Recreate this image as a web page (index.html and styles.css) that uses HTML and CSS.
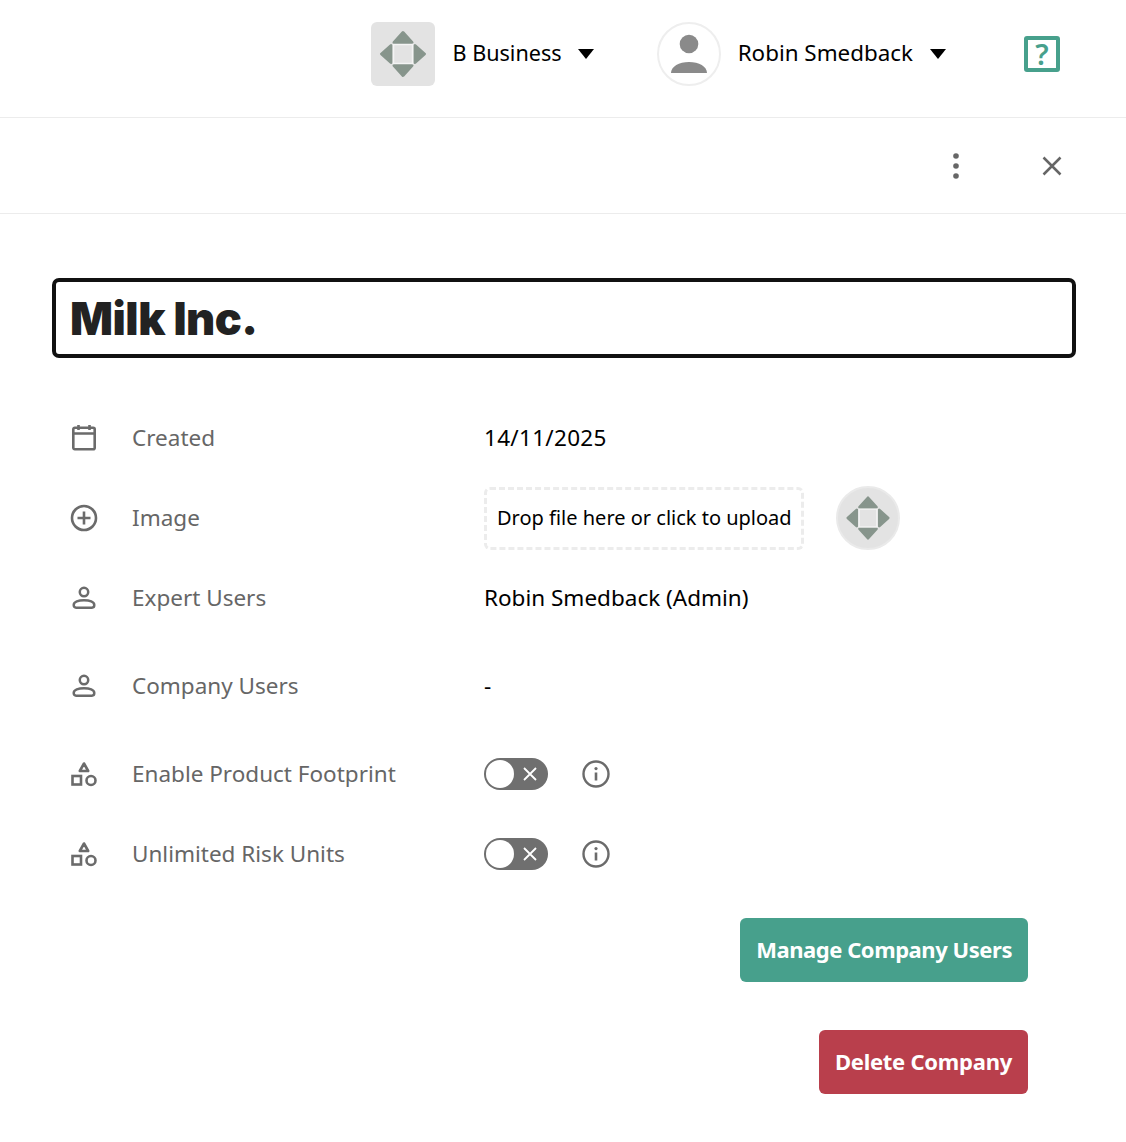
FILE: index.html
```html
<!DOCTYPE html>
<html lang="en">
  <head>
    <meta charset="UTF-8" />
    <meta name="viewport" content="width=device-width, initial-scale=1.0" />
    <title>Milk Inc.</title>
    <link rel="stylesheet" href="styles.css">
  </head>
  <body>
    <svg class="defs" width="0" height="0">
      <symbol id="logo" viewBox="0 0 64 64">
        <g fill="#87958c" stroke="#87958c" stroke-width="3" stroke-linejoin="round">
          <path d="M32 10.500 41 20.500H23Z" />
          <path d="M32 53.500 41 43.500H23Z" />
          <path d="M10.500 32 20 23.500V40.500Z" />
          <path d="M53.500 32 44 23.500V40.500Z" />
        </g>
        <path d="M22 22.500H42M22 41.500H42M22.500 22V42M41.500 22V42" stroke="#f4f4f4" stroke-width="1.500" fill="none" />
      </symbol>
      <symbol id="person" viewBox="0 0 24 24">
        <circle cx="12" cy="6.500" r="3.900" fill="none" stroke="currentColor" stroke-width="2.300" />
        <path d="M2.500 18.500c0-3 4.500-4.500 9.500-4.500s9.500 1.500 9.500 4.500c0 1.400-.8 2.400-2.200 2.400H4.700c-1.400 0-2.200-1-2.200-2.400Z" fill="none" stroke="currentColor" stroke-width="2.300" />
      </symbol>
      <symbol id="shapes" viewBox="0 0 26 26">
        <path d="M13 2.500 17.200 10H8.800Z" fill="none" stroke="currentColor" stroke-width="2.600" stroke-linejoin="round" />
        <rect x="1.500" y="15" width="8.500" height="8.500" fill="none" stroke="currentColor" stroke-width="2.600" />
        <circle cx="20" cy="19.500" r="4.500" fill="none" stroke="currentColor" stroke-width="2.600" />
      </symbol>
      <symbol id="info" viewBox="0 0 28 28">
        <circle cx="14" cy="14" r="12.500" fill="none" stroke="currentColor" stroke-width="2.400" />
        <circle cx="14" cy="8.600" r="1.600" fill="currentColor" />
        <path d="M14 12.500V20.500" stroke="currentColor" stroke-width="2.600" />
      </symbol>
    </svg>

    <header class="topbar">
      <div class="menu menu-company">
        <span class="logo-box"><svg width="64" height="64"><use href="#logo" /></svg></span>
        <span class="menu-name">B Business</span>
        <span class="caret"></span>
      </div>
      <div class="menu menu-user">
        <span class="avatar">
          <svg width="60" height="60" viewBox="0 0 60 60">
            <circle cx="30" cy="20" r="9.300" fill="#8a8a8a" />
            <path d="M12 49c0-6.500 8-11 18-11s18 4.500 18 11Z" fill="#8a8a8a" />
          </svg>
        </span>
        <span class="menu-name">Robin Smedback</span>
        <span class="caret"></span>
      </div>
      <span class="help">?</span>
    </header>

    <div class="toolbar">
      <span class="tool">
        <svg width="24" height="28" viewBox="0 0 24 28" fill="#666">
          <circle cx="12" cy="4" r="2.800" /><circle cx="12" cy="14" r="2.800" /><circle cx="12" cy="24" r="2.800" />
        </svg>
      </span>
      <span class="tool">
        <svg width="24" height="24" viewBox="0 0 24 24" stroke="#666" stroke-width="2.500">
          <path d="M3.500 3.500 20.500 20.500M20.500 3.500 3.500 20.500" />
        </svg>
      </span>
    </div>

    <main class="content">
      <div class="title-box">Milk Inc.</div>

      <div class="rows">
        <div class="row">
          <svg class="row-icon" width="28" height="28" viewBox="0 0 28 28" fill="none" stroke="currentColor" stroke-width="2.600">
            <rect x="3.300" y="3.800" width="21.400" height="21.400" rx="1.500" />
            <path d="M3.300 9.500H24.700M8.500 1V6M19.500 1V6" />
          </svg>
          <span class="row-label">Created</span>
          <div class="row-value"><span class="row-text row-date">14/11/2025</span></div>
        </div>
        <div class="row">
          <svg class="row-icon" width="28" height="28" viewBox="0 0 28 28" fill="none" stroke="currentColor" stroke-width="2.600">
            <circle cx="14" cy="14" r="12" />
            <path d="M14 7.500V20.500M7.500 14H20.500" />
          </svg>
          <span class="row-label">Image</span>
          <div class="row-value">
            <div class="upload">Drop file here or click to upload</div>
            <span class="thumb"><svg width="60" height="60"><use href="#logo" /></svg></span>
          </div>
        </div>
        <div class="row row-users">
          <svg class="row-icon icon-small" width="26" height="26"><use href="#person" /></svg>
          <span class="row-label">Expert Users</span>
          <div class="row-value"><span class="row-text">Robin Smedback (Admin)</span></div>
        </div>
        <div class="row row-users">
          <svg class="row-icon icon-small" width="26" height="26"><use href="#person" /></svg>
          <span class="row-label">Company Users</span>
          <div class="row-value"><span class="row-text">-</span></div>
        </div>
        <div class="row">
          <svg class="row-icon icon-small" width="26" height="26"><use href="#shapes" /></svg>
          <span class="row-label">Enable Product Footprint</span>
          <div class="row-value">
            <span class="toggle"><span class="knob"></span><span class="toggle-x">
              <svg width="14" height="14" viewBox="0 0 14 14" stroke="#fff" stroke-width="1.800"><path d="M1 1 13 13M13 1 1 13" /></svg>
            </span></span>
            <svg class="info" width="28" height="28"><use href="#info" /></svg>
          </div>
        </div>
        <div class="row">
          <svg class="row-icon icon-small" width="26" height="26"><use href="#shapes" /></svg>
          <span class="row-label">Unlimited Risk Units</span>
          <div class="row-value">
            <span class="toggle"><span class="knob"></span><span class="toggle-x">
              <svg width="14" height="14" viewBox="0 0 14 14" stroke="#fff" stroke-width="1.800"><path d="M1 1 13 13M13 1 1 13" /></svg>
            </span></span>
            <svg class="info" width="28" height="28"><use href="#info" /></svg>
          </div>
        </div>
      </div>

      <div class="actions">
        <button class="btn btn-green">Manage Company Users</button>
        <button class="btn btn-red">Delete Company</button>
      </div>
    </main>
  </body>
</html>
```

FILE: styles.css
```css
body {
  font-family: "Noto Sans", Arial, sans-serif;
  font-size: 22.5px;
  color: #000;
  margin: 0;
  padding: 0;
  background: #fff;
}
.defs {
  display: block;
  height: 0;
}
.topbar {
  height: 107px;
  display: flex;
  align-items: center;
  justify-content: flex-end;
  padding-right: 66px;
  padding-bottom: 10px;
  border-bottom: 1px solid #ececec;
}
.menu {
  display: flex;
  align-items: center;
}
.menu-company {
  margin-right: 63px;
}
.menu-company .menu-name {
  font-size: 21.6px;
  margin-right: 16px;
}
.menu-user {
  margin-right: 78px;
}
.menu-user .menu-name {
  font-size: 22.4px;
}
.logo-box {
  width: 64px;
  height: 64px;
  border-radius: 6px;
  background: #e3e3e3;
  display: block;
}
.logo-box svg,
.thumb svg,
.avatar svg {
  display: block;
}
.avatar {
  width: 60px;
  height: 60px;
  border: 2px solid #eee;
  border-radius: 50%;
  display: block;
}
.menu-name {
  margin-left: 17px;
  margin-right: 17px;
  padding-bottom: 2px;
}
.caret {
  width: 0;
  height: 0;
  border-left: 8px solid transparent;
  border-right: 8px solid transparent;
  border-top: 10px solid #000;
}
.help {
  width: 28px;
  height: 28px;
  border: 4px solid #47a08c;
  border-radius: 3px;
  color: #47a08c;
  font-size: 29px;
  font-weight: 600;
  line-height: 28px;
  text-align: center;
}
.toolbar {
  height: 95px;
  display: flex;
  align-items: center;
  justify-content: flex-end;
  gap: 48px;
  padding-right: 50px;
  border-bottom: 1px solid #ececec;
}
.tool {
  width: 48px;
  height: 48px;
  display: flex;
  align-items: center;
  justify-content: center;
}
.content {
  padding: 64px 50px 0 52px;
}
.title-box {
  height: 72px;
  border: 4px solid #111;
  border-radius: 7px;
  padding-left: 14px;
  font-family: Inter, Arial, sans-serif;
  font-size: 45px;
  font-weight: 900;
  line-height: 74px;
  letter-spacing: -0.5px;
  color: #222;
}
.rows {
  margin-top: 48px;
}
.row {
  display: flex;
  align-items: center;
  height: 64px;
  margin-bottom: 16px;
}
.row-users {
  margin-bottom: 24px;
}
.row-icon {
  color: #6b6b6b;
  margin-left: 18px;
  margin-right: 34px;
  flex-shrink: 0;
}
.icon-small {
  margin-left: 19px;
  margin-right: 35px;
}
.row-label {
  width: 352px;
  color: #666;
  padding-bottom: 2px;
}
.row-value {
  display: flex;
  align-items: center;
}
.row-text {
  padding-bottom: 2px;
}
.row-date {
  letter-spacing: 0.3px;
}
.upload {
  width: 294px;
  height: 57px;
  border: 3px dashed #ececec;
  border-radius: 6px;
  padding: 0 10px;
  font-size: 20px;
  line-height: 55px;
  white-space: nowrap;
}
.thumb {
  width: 60px;
  height: 60px;
  margin-left: 32px;
  border: 2px solid #eaeaea;
  border-radius: 50%;
  background: #e3e3e3;
}
.toggle {
  width: 64px;
  height: 32px;
  border-radius: 16px;
  background: #6f6f6f;
  display: flex;
  align-items: center;
}
.knob {
  width: 28px;
  height: 28px;
  margin-left: 2px;
  background: #fff;
  border-radius: 50%;
}
.toggle-x {
  display: flex;
  margin-left: 9px;
}
.info {
  color: #6b6b6b;
  margin-left: 34px;
}
.actions {
  display: flex;
  flex-direction: column;
  align-items: flex-end;
  gap: 48px;
  margin-top: 32px;
  margin-right: 48px;
}
.btn {
  height: 64px;
  padding: 0 16px 3px;
  border: 0;
  border-radius: 6px;
  color: #fff;
  font-family: "Noto Sans", Arial, sans-serif;
  font-size: 22px;
  font-weight: 700;
  cursor: pointer;
}
.btn-green {
  background: #47a08c;
  letter-spacing: -0.45px;
}
.btn-red {
  background: #b93f4c;
  letter-spacing: -0.25px;
}
```
